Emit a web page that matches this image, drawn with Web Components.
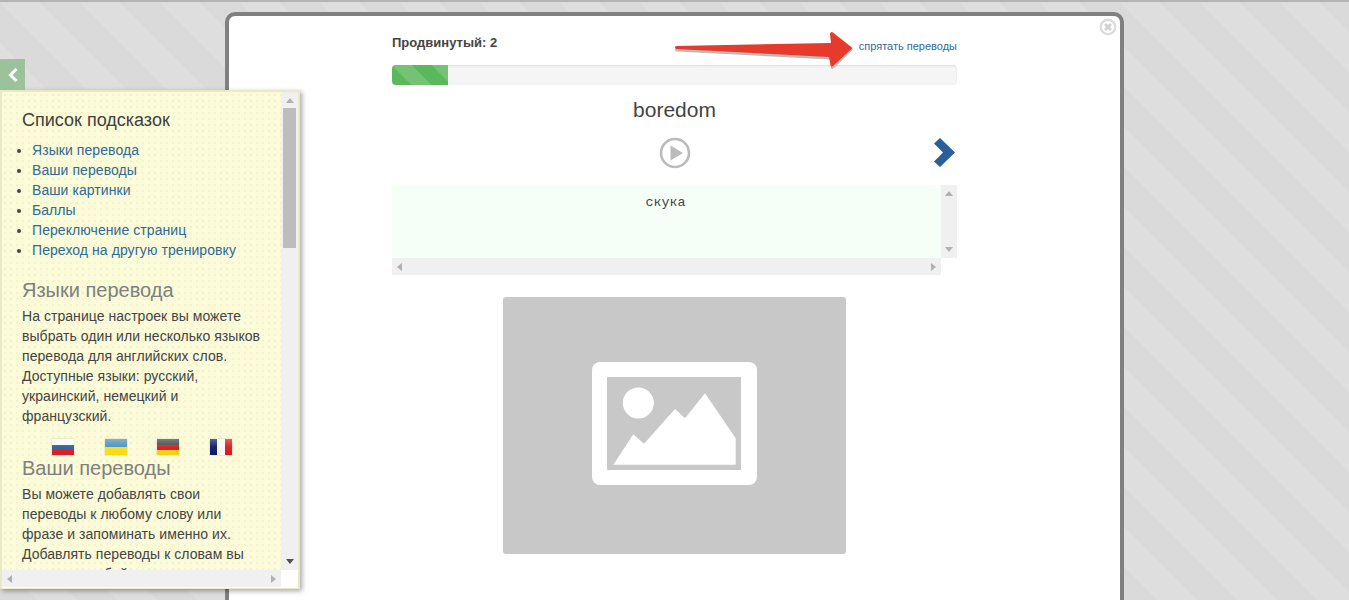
<!DOCTYPE html>
<html lang="ru">
<head>
<meta charset="utf-8">
<title>Тренировка</title>
<style>
    html, body { margin: 0; height: 600px; overflow: hidden; }
    body { font-family: "Liberation Sans", Arial, sans-serif; color: #444; }
</style>
</head>
<body>

<training-page>
    <tips-panel>
        <tip-list>
            <a>Языки перевода</a>
            <a>Ваши переводы</a>
            <a>Ваши картинки</a>
            <a>Баллы</a>
            <a>Переключение страниц</a>
            <a>Переход на другую тренировку</a>
        </tip-list>
        <tip-section heading="Языки перевода">
            На странице настроек вы можете выбрать один или несколько языков перевода для английских слов. Доступные языки: русский, украинский, немецкий и французский.
        </tip-section>
        <flag-row></flag-row>
        <tip-section heading="Ваши переводы" tight>
            Вы можете добавлять свои переводы к любому слову или фразе и запоминать именно их. Добавлять переводы к словам вы можете с любой страницы.
        </tip-section>
    </tips-panel>
    <training-modal>
        <level-bar label="Продвинутый: 2" link="спрятать переводы" percent="9.9"></level-bar>
        <word-card word="boredom"></word-card>
        <translation-box>скука</translation-box>
        <picture-stub></picture-stub>
    </training-modal>
</training-page>

<script>
(function() {
    'use strict';

    function define(name, template, setup) {
        customElements.define(name, class extends HTMLElement {
            constructor() {
                super();
                this.attachShadow({mode: 'open'}).innerHTML = template;
                if (setup) setup(this, this.shadowRoot);
            }
        });
    }

    define('training-page', `
        <style>
            :host {
                display: block;
                position: relative;
                height: 600px;
                overflow: hidden;
                box-sizing: border-box;
                background: repeating-linear-gradient(45deg, #dadada 0, #dadada 26.87px, #dedede 26.87px, #dedede 55.15px, #dadada 55.15px, #dadada 56.568px);
            }
            .topline { height: 2px; background: #b4b4b4; }
        </style>
        <div class="topline"></div>
        <slot></slot>
    `);

    // vertical or horizontal bar, same look as the old webkit ones
    define('fake-scrollbar', `
        <style>
            :host {
                display: flex;
                justify-content: space-between;
                align-items: center;
                background: #f0f0f0;
                flex: none;
                position: relative;
            }
            :host([dir-v]) { flex-direction: column; width: 17px; padding: 6px 0; box-sizing: border-box; }
            :host([dir-h]) { height: 17px; padding: 0 5px; box-sizing: border-box; }
            i { width: 0; height: 0; border: 4px solid transparent; display: block; }
            :host([dir-v]) .a { border-bottom: 5px solid #b0b0b0; border-top: 0; }
            :host([dir-v]) .b { border-top: 5px solid #505050; border-bottom: 0; }
            :host([dir-h]) .a { border-right: 5px solid #b0b0b0; border-left: 0; }
            :host([dir-h]) .b { border-left: 5px solid #b0b0b0; border-right: 0; }
            :host([pale]) .b { border-top-color: #b0b0b0; }
            .thumb { position: absolute; left: 2px; right: 2px; top: 16px; height: 140px; background: #bdbdbd; }
        </style>
        <i class="a"></i><i class="b"></i>
    `, function(el, root) {
        if (el.hasAttribute('thumb')) {
            let t = document.createElement('div');
            t.className = 'thumb';
            root.appendChild(t);
        }
    });

    define('tips-panel', `
        <style>
            :host {
                display: grid;
                grid-template-columns: 279px 17px;
                grid-template-rows: 478px 18px;
                position: absolute;
                left: 0;
                top: 90px;
                width: 300px;
                height: 499px;
                box-sizing: border-box;
                background: #fff;
                border: 2px solid #e9e9c8;
                border-width: 2px 2px 1px 2px;
                box-shadow: 2px 2px 5px rgba(0,0,0,.35);
                z-index: 2;
                font-size: 14px;
                letter-spacing: .05px;
            }
            .tab {
                position: absolute;
                left: -2px;
                top: -33px;
                width: 25px;
                height: 31px;
                background: #9cc29c;
                display: flex;
                align-items: center;
                justify-content: center;
            }
            .body {
                overflow: hidden;
                background-color: #fbfbd9;
                background-image: radial-gradient(#f3f3cb .7px, transparent .8px);
                background-size: 6px 6px;
                padding: 0 20px;
                box-sizing: border-box;
            }
            h3 {
                margin: 18px 0 0;
                font-size: 18px;
                font-weight: 400;
                line-height: 20px;
                color: #404040;
                letter-spacing: 0;
            }
            .corner { background: #fff; }
        </style>
        <div class="tab">
            <svg width="12" height="16" viewBox="0 0 12 16"><path d="M9.5 2 L3.5 8 L9.5 14" fill="none" stroke="#fff" stroke-width="3"/></svg>
        </div>
        <div class="body">
            <h3>Список подсказок</h3>
            <slot></slot>
        </div>
        <fake-scrollbar dir-v thumb></fake-scrollbar>
        <fake-scrollbar dir-h></fake-scrollbar>
        <div class="corner"></div>
    `);

    define('tip-list', `
        <style>
            :host { display: block; margin-top: 10px; }
            ::slotted(a) {
                display: list-item;
                margin-left: 10px;
                line-height: 20px;
                color: #2f6a96;
                letter-spacing: .07px;
                list-style: disc;
            }
            ::slotted(a)::marker { color: #444; }
        </style>
        <slot></slot>
    `);

    define('tip-section', `
        <style>
            :host { display: block; padding-top: 17px; }
            :host([tight]) { padding-top: 0; }
            h4 {
                margin: 0;
                font-size: 20px;
                font-weight: 400;
                line-height: 26px;
                color: #808080;
                letter-spacing: 0;
            }
            .text { line-height: 20px; color: #444; padding-top: 3px; }
        </style>
        <h4></h4>
        <div class="text"><slot></slot></div>
    `, function(el, root) {
        root.querySelector('h4').textContent = el.getAttribute('heading');
    });

    define('flag-row', `
        <style>
            :host {
                display: flex;
                gap: 30.5px;
                padding: 13px 0 0 30px;
                height: 16px;
            }
            svg { display: block; flex: none; box-shadow: 0 0 1px rgba(120,120,120,.6); }
        </style>
        <svg width="0" height="0" style="position:absolute;box-shadow:none">
            <defs>
                <linearGradient id="gloss" x1="0" y1="0" x2="0" y2="1">
                    <stop offset="0" stop-color="#fff" stop-opacity=".3"/>
                    <stop offset=".5" stop-color="#fff" stop-opacity=".05"/>
                    <stop offset="1" stop-color="#fff" stop-opacity="0"/>
                </linearGradient>
            </defs>
        </svg>
        <svg width="22" height="16" viewBox="0 0 22 16">
            <rect width="22" height="6" fill="#fafafa"/><rect y="6" width="22" height="5" fill="#2f5f94"/><rect y="11" width="22" height="5" fill="#dc1c24"/>
            <rect width="22" height="16" fill="url(#gloss)"/>
        </svg>
        <svg width="22" height="16" viewBox="0 0 22 16">
            <rect width="22" height="8" fill="#4a8fbb"/><rect y="8" width="22" height="8" fill="#f8dc14"/>
            <rect width="22" height="16" fill="url(#gloss)"/>
        </svg>
        <svg width="22" height="16" viewBox="0 0 22 16">
            <rect width="22" height="6" fill="#444"/><rect y="6" width="22" height="5" fill="#e0161e"/><rect y="11" width="22" height="5" fill="#f4cf1a"/>
            <rect width="22" height="16" fill="url(#gloss)"/>
        </svg>
        <svg width="22" height="16" viewBox="0 0 22 16">
            <rect width="7" height="16" fill="#0e1a6a"/><rect x="7" width="8" height="16" fill="#f8f8f8"/><rect x="15" width="7" height="16" fill="#e0161e"/>
            <rect width="22" height="16" fill="url(#gloss)"/>
        </svg>
    `);

    define('training-modal', `
        <style>
            :host {
                display: block;
                position: relative;
                box-sizing: border-box;
                width: 899px;
                height: 620px;
                margin: 10px 0 0 225px;
                background: #fff;
                border: 4px solid #808080;
                border-radius: 10px;
                padding-left: 163px;
            }
            .column { width: 565px; }
            .close { position: absolute; right: 3px; top: 2px; }
        </style>
        <svg class="close" width="18" height="18" viewBox="0 0 18 18">
            <circle cx="9" cy="9" r="7.2" fill="none" stroke="#ddd" stroke-width="2.4"/>
            <path d="M6 6 L12 12 M12 6 L6 12" stroke="#d0d0d0" stroke-width="2.6"/>
        </svg>
        <div class="column"><slot></slot></div>
    `);

    define('level-bar', `
        <style>
            :host { display: block; position: relative; }
            .head {
                display: flex;
                justify-content: space-between;
                align-items: flex-start;
                height: 49px;
            }
            b { font-size: 13px; line-height: 15px; margin-top: 19px; color: #444; }
            a { font-size: 11px; line-height: 13px; margin-top: 24px; color: #2f6a96; }
            .track {
                height: 20px;
                background: #f5f5f5;
                border-radius: 4px;
                overflow: hidden;
                box-shadow: inset 0 1px 2px rgba(0,0,0,.1);
            }
            .fill {
                height: 100%;
                background-color: #5cb85c;
                background-image: linear-gradient(45deg, rgba(255,255,255,.15) 25%, transparent 25%, transparent 50%, rgba(255,255,255,.15) 50%, rgba(255,255,255,.15) 75%, transparent 75%, transparent);
                background-size: 40px 40px;
            }
            .arrow { position: absolute; left: 282px; top: 14px; }
        </style>
        <div class="head"><b></b><a></a></div>
        <div class="track"><div class="fill"></div></div>
        <svg class="arrow" width="182" height="42" viewBox="0 0 182 42">
            <path d="M2 20 Q0 18 2 17 L158 14 L156 3.5 Q157 1 159 2.5 L179 18 L160 36.5 Q157 38.5 157 36 L156 28 Z" fill="#bbb" transform="translate(0,1.5)"/>
            <path d="M2 19 Q0 17.5 2 16 L157 13 L156 3.5 Q157 1 159 2.5 L178.5 18 L159 36 Q156.5 37.5 156.5 35 L155 27 Z" fill="#e63a2c"/>
        </svg>
    `, function(el, root) {
        root.querySelector('b').textContent = el.getAttribute('label');
        root.querySelector('a').textContent = el.getAttribute('link');
        root.querySelector('.fill').style.width = el.getAttribute('percent') + '%';
    });

    define('word-card', `
        <style>
            :host { display: block; }
            .word {
                height: 50px;
                line-height: 50px;
                text-align: center;
                font-size: 21px;
                color: #444;
            }
            .controls {
                display: flex;
                justify-content: center;
                align-items: center;
                position: relative;
                height: 36px;
                margin-bottom: 14px;
            }
            .next { position: absolute; right: 2px; top: 3px; }
        </style>
        <div class="word"></div>
        <div class="controls">
            <svg width="32" height="32" viewBox="0 0 32 32">
                <circle cx="16" cy="16" r="14" fill="none" stroke="#bbb" stroke-width="2.6"/>
                <path d="M11.5 8.5 L24 16 L11.5 23.5 Z" fill="#bbb"/>
            </svg>
            <svg class="next" width="21" height="29" viewBox="0 0 21 29">
                <path d="M0 5.5 L6 0 L21 14.5 L6 29 L0 23.5 L9 14.5 Z" fill="#2a6099"/>
            </svg>
        </div>
    `, function(el, root) {
        root.querySelector('.word').textContent = el.getAttribute('word');
    });

    define('translation-box', `
        <style>
            :host {
                display: grid;
                grid-template-columns: 549px 16px;
                grid-template-rows: 73px 17px;
                height: 90px;
            }
            .text {
                background: #f5fff8;
                text-align: center;
                font-family: "Liberation Mono", "DejaVu Sans Mono", monospace;
                font-size: 13.33px;
                line-height: 16px;
                padding: 10px 2px 0 0;
                box-sizing: border-box;
                color: #444;
            }
            fake-scrollbar[dir-v] { width: 16px; }
        </style>
        <div class="text"><slot></slot></div>
        <fake-scrollbar dir-v pale></fake-scrollbar>
        <fake-scrollbar dir-h></fake-scrollbar>
    `);

    define('picture-stub', `
        <style>
            :host {
                display: flex;
                align-items: center;
                justify-content: center;
                width: 343px;
                height: 257px;
                margin: 22px auto 0;
                background: #c8c8c8;
                border-radius: 3px;
            }
            svg { display: block; margin-top: -4px; }
        </style>
        <svg width="165" height="123" viewBox="0 0 165 123">
            <rect width="165" height="123" rx="8" fill="#fff"/>
            <rect x="15" y="15" width="134" height="93" fill="#c8c8c8"/>
            <circle cx="46.3" cy="41" r="15.5" fill="#fff"/>
            <path d="M21.3 102.7 L41.3 72.3 L52 81.7 L83 47 L93 56.3 L113 31.3 L143.7 76.3 L143.7 102.7 Z" fill="#fff"/>
        </svg>
    `);

})();
</script>
</body>
</html>
